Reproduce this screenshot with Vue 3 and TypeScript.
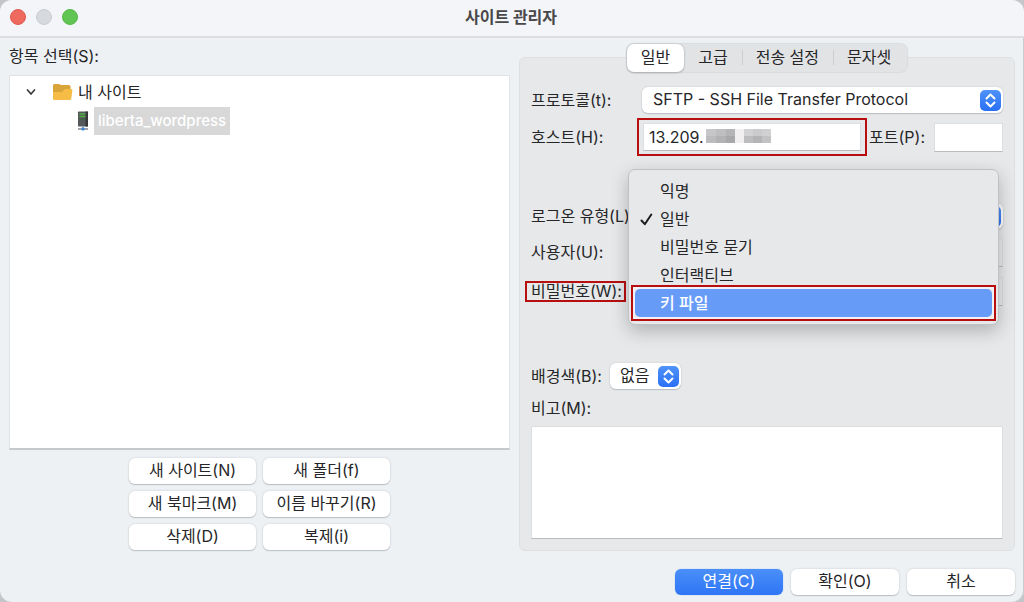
<script setup lang="ts">
import { ref } from 'vue'

const tabs = ['일반', '고급', '전송 설정', '문자셋']
const activeTab = ref(0)

const siteActions = [
  '새 사이트(N)',
  '새 폴더(f)',
  '새 북마크(M)',
  '이름 바꾸기(R)',
  '삭제(D)',
  '복제(i)',
]

const logonTypes = ['익명', '일반', '비밀번호 묻기', '인터랙티브', '키 파일']
const logonType = ref('일반')
const highlighted = ref('키 파일')

const protocol = ref('SFTP - SSH File Transfer Protocol')
const host = ref('13.209.')
const port = ref('')
const user = ref('')
const password = ref('')
const colour = ref('없음')
const notes = ref('')

const mosaic = [
  { x: 0, y: 0, w: 10, c: '#c6c6c8' },
  { x: 10, y: 0, w: 10, c: '#bebec0' },
  { x: 20, y: 0, w: 9, c: '#b4b4b6' },
  { x: 0, y: 7, w: 10, c: '#bcbcbe' },
  { x: 10, y: 7, w: 10, c: '#b2b2b4' },
  { x: 20, y: 7, w: 9, c: '#a8a8aa' },
  { x: 29, y: 0, w: 9, c: '#f1eff0' },
  { x: 29, y: 7, w: 9, c: '#f1eff0' },
  { x: 38, y: 0, w: 9, c: '#d2d2d4' },
  { x: 47, y: 0, w: 9, c: '#cacacc' },
  { x: 56, y: 0, w: 9, c: '#d0d0d2' },
  { x: 38, y: 7, w: 9, c: '#bdbdbf' },
  { x: 47, y: 7, w: 9, c: '#b4b4b6' },
  { x: 56, y: 7, w: 9, c: '#c2c2c4' },
]
</script>

<template>
  <div class="window">
    <header class="titlebar">
      <div class="lights">
        <button class="light close" type="button" aria-label="닫기"></button>
        <button class="light minimize" type="button" aria-label="최소화"></button>
        <button class="light zoom" type="button" aria-label="확대"></button>
      </div>
      <h1>사이트 관리자</h1>
    </header>

    <main class="body">
      <section class="sites">
        <div id="tree-label" class="tree-label">항목 선택(S):</div>
        <ul class="tree" role="tree" aria-labelledby="tree-label">
          <li class="node" role="treeitem" aria-expanded="true">
            <svg class="chevron" viewBox="0 0 10 8" width="10" height="8">
              <path d="M1.5 2 5 6 8.5 2" fill="none" stroke="#3d3d3f" stroke-width="1.7" stroke-linecap="round" stroke-linejoin="round" />
            </svg>
            <svg class="folder" viewBox="0 0 21 18" width="21" height="18">
              <path d="M1 2.5Q1 1 2.5 1H7l2 1h8q1.5 0 1.500 1.500V9H1z" fill="#d9a53a" />
              <path d="M1 9h9l3-3H19.500q1 0 .9 1l-1.100 8.800q-.2 1.200-1.500 1.200H2.500Q1 17 1 15.500z" fill="#f5bd45" />
            </svg>
            <span>내 사이트</span>
          </li>
          <li class="node child" role="treeitem" aria-selected="true">
            <svg class="server" viewBox="0 0 12 20" width="12" height="20">
              <rect x="1" y="0.5" width="10" height="15" rx="0.8" fill="#55585a" />
              <rect x="8.5" y="0.5" width="2.5" height="15" fill="#343638" />
              <path d="M2.500 3h6M2.500 5.500h6" stroke="#4fae45" stroke-width="1.5" />
              <path d="M3 8h5" stroke="#34653a" />
              <path d="M6 15.5v2M1 18h10" stroke="#7d8790" stroke-width="1.3" />
              <rect x="4.5" y="16.5" width="3" height="3" rx="1" fill="#3d86d8" />
            </svg>
            <span class="selected">liberta_wordpress</span>
          </li>
        </ul>
        <div class="actions">
          <button v-for="action in siteActions" :key="action" class="push" type="button">{{ action }}</button>
        </div>
      </section>

      <section class="panel">
        <div class="tabs" role="tablist">
          <button
            v-for="(tab, index) in tabs"
            :key="tab"
            class="tab"
            :class="{ active: index === activeTab }"
            type="button"
            role="tab"
            :aria-selected="index === activeTab"
            @click="activeTab = index"
          >
            {{ tab }}
          </button>
        </div>

        <div class="row protocol-row">
          <label class="caption" for="protocol">프로토콜(t):</label>
          <div class="popup">
            <select id="protocol" v-model="protocol">
              <option>SFTP - SSH File Transfer Protocol</option>
            </select>
            <svg class="arrows" viewBox="0 0 21 21" width="21" height="21">
              <path d="M6.5 8.500l4-4 4 4M6.500 12.500l4 4 4-4" />
            </svg>
          </div>
        </div>

        <div class="row host-row">
          <label class="caption" for="host">호스트(H):</label>
          <div class="host-mark">
            <input id="host" v-model="host" class="field" type="text" />
            <svg class="mosaic" viewBox="0 0 65 14" width="65" height="14" aria-hidden="true">
              <rect v-for="(cell, i) in mosaic" :key="i" :x="cell.x" :y="cell.y" :width="cell.w" height="7" :fill="cell.c" />
            </svg>
          </div>
          <label class="port-caption" for="port">포트(P):</label>
          <input id="port" v-model="port" class="field port" type="text" />
        </div>

        <div class="row logon-row">
          <label class="caption" for="logon">로그온 유형(L):</label>
          <div class="popup">
            <select id="logon" v-model="logonType">
              <option v-for="type in logonTypes" :key="type">{{ type }}</option>
            </select>
            <svg class="arrows" viewBox="0 0 21 21" width="21" height="21">
              <path d="M6.5 8.500l4-4 4 4M6.500 12.500l4 4 4-4" />
            </svg>
            <ul class="menu" role="listbox" aria-label="로그온 유형">
              <li
                v-for="type in logonTypes"
                :key="type"
                class="choice"
                :class="{ hot: type === highlighted }"
                role="option"
                :aria-selected="type === logonType"
                @mouseenter="highlighted = type"
                @click="logonType = type"
              >
                <svg v-if="type === logonType" class="check" viewBox="0 0 13 13" width="13" height="13">
                  <path d="M1.500 7.500 4.800 11.200 11.300 1.500" fill="none" stroke="#1c1c1e" stroke-width="2" stroke-linecap="round" stroke-linejoin="round" />
                </svg>
                {{ type }}
              </li>
            </ul>
          </div>
        </div>

        <div class="row user-row">
          <label class="caption" for="user">사용자(U):</label>
          <input id="user" v-model="user" class="field muted" type="text" />
        </div>

        <div class="row password-row">
          <div class="caption"><label class="marked" for="password">비밀번호(W):</label></div>
          <input id="password" v-model="password" class="field muted" type="password" />
        </div>

        <div class="row colour-row">
          <label for="colour">배경색(B):</label>
          <div class="popup small">
            <select id="colour" v-model="colour">
              <option>없음</option>
            </select>
            <svg class="arrows" viewBox="0 0 21 21" width="21" height="21">
              <path d="M6.5 8.500l4-4 4 4M6.500 12.500l4 4 4-4" />
            </svg>
          </div>
        </div>

        <label class="notes-caption" for="notes">비고(M):</label>
        <textarea id="notes" v-model="notes" class="field notes"></textarea>
      </section>
    </main>

    <footer class="footer">
      <button class="push primary" type="button">연결(C)</button>
      <button class="push" type="button">확인(O)</button>
      <button class="push" type="button">취소</button>
    </footer>
  </div>
</template>

<style>
body {
  margin: 0;
  background: #c3c5c8;
}
</style>

<style scoped>
.window,
.window * {
  box-sizing: border-box;
}

.window {
  display: flex;
  flex-direction: column;
  min-height: 100vh;
  overflow: hidden;
  border-radius: 12px;
  background: #edf1f4;
  box-shadow: inset -1px 0 #c9cccf, inset 0 1px #d5d7d9;
  color: #262628;
  font: 16px/20px Inter, 'Noto Sans CJK KR', sans-serif;
}

button,
input,
select,
textarea {
  margin: 0;
  border: 0;
  color: inherit;
  font: inherit;
}

ul {
  margin: 0;
  padding: 0;
  list-style: none;
}

label {
  white-space: nowrap;
}

.titlebar {
  display: grid;
  grid-template-columns: 1fr auto 1fr;
  align-items: center;
  height: 38px;
  padding: 0 12px 2px 10px;
  border-bottom: 2px solid #dcdee1;
  background: #f4f5f8;
}

.titlebar h1 {
  margin: 0;
  color: #48484a;
  font-size: 16px;
  font-weight: 700;
  line-height: 20px;
}

.lights {
  display: flex;
  gap: 10px;
}

.light {
  width: 16px;
  height: 16px;
  padding: 0;
  border: 1px solid #df5a50;
  border-radius: 50%;
  background: #ee6a5f;
}

.minimize {
  border-color: #c9ccd0;
  background: #d6d9dd;
}

.zoom {
  border-color: #56b847;
  background: #61c554;
}

.body {
  display: grid;
  flex: 1;
  grid-template-columns: 501fr 496fr;
  gap: 9px;
  padding: 0 9px;
}

.sites {
  display: flex;
  flex-direction: column;
  min-width: 0;
}

.tree-label {
  height: 37px;
  padding-top: 8px;
}

.tree {
  flex: 1;
  padding: 1px 0 0 16px;
  border: 1px solid #e0e3e5;
  border-bottom: 2px solid #c6c9cc;
  background: #fff;
}

.node {
  display: flex;
  align-items: center;
  height: 29px;
}

.chevron {
  margin-right: 16px;
}

.folder {
  margin-right: 5px;
}

.child {
  padding-left: 51px;
}

.server {
  margin-right: 5px;
}

.selected {
  padding: 4px;
  background: #d8d8d8;
  color: #fff;
  font-size: 15px;
  font-weight: 500;
}

.actions {
  display: grid;
  grid-template-columns: 127px 127px;
  justify-content: center;
  gap: 7px;
  padding: 8px 0 1px;
}

.push {
  height: 26px;
  padding: 0 4px 2px;
  border-radius: 6px;
  background: #fff;
  box-shadow: 0 0 2px #c3c7cb, 0 1px 1px #b9bdc1;
  line-height: 22px;
  white-space: nowrap;
}

.panel {
  display: flex;
  flex-direction: column;
  min-width: 0;
  margin-top: 19px;
  padding: 0 11px;
  padding-bottom: 11px;
  border: 1px solid #dddfe1;
  border-radius: 6px;
  background: #e7e8ea;
}

.tabs {
  display: flex;
  align-self: center;
  height: 28px;
  margin: -14px 0 14px;
  padding-right: 2px;
  border-radius: 7px;
  background: #e1e3e5;
  box-shadow: 0 0 1px 1px #d9dbdd;
}

.tab {
  position: relative;
  padding: 0 14px 2px;
  border-radius: 7px;
  background: transparent;
  white-space: nowrap;
}

.tab.active {
  background: #fff;
  box-shadow: 0 0 2px #b5b8ba, 0 1px 2px #a9adb1;
}

.tab:nth-child(n + 3)::before {
  position: absolute;
  top: 6px;
  left: 0;
  width: 1px;
  height: 15px;
  background: #cbcdcf;
  content: '';
}

.row {
  display: flex;
  align-items: center;
  height: 28px;
}

.caption {
  flex: none;
  width: 111px;
}

.popup {
  position: relative;
  display: flex;
  flex: 1;
  height: 26px;
}

.popup select {
  width: 100%;
  padding: 0 28px 2px 11px;
  border-radius: 6px;
  appearance: none;
  background: #fff;
  box-shadow: 0 0 2px #c3c6c9, 0 1px 1px #b9bdc1;
}

.arrows {
  position: absolute;
  top: 3px;
  right: 2px;
  border-radius: 5px;
  background: linear-gradient(#4f92f8, #2a70f5);
  pointer-events: none;
}

.arrows path {
  fill: none;
  stroke: #fff;
  stroke-width: 2;
  stroke-linecap: round;
  stroke-linejoin: round;
}

.field {
  min-width: 0;
  height: 29px;
  padding: 0 5px;
  border: 1px solid #dcdee0;
  border-bottom-color: #b9bbbd;
  border-radius: 0;
  outline: 0;
  background: #fff;
}

.host-row {
  height: 38px;
  margin-top: 4px;
}

.host-mark {
  position: relative;
  display: flex;
  flex: 1;
  min-width: 0;
  margin-left: -5px;
  padding: 3px 4px;
  border: 2px solid #b80e10;
}

.host-mark .field {
  width: 100%;
  height: 28px;
}

.mosaic {
  position: absolute;
  top: 9px;
  left: 67px;
}

.port-caption {
  margin: 0 9px 0 2px;
}

.port {
  width: 69px;
}

.logon-row {
  margin-top: 46px;
}

.menu {
  position: absolute;
  z-index: 2;
  top: -34px;
  right: 4px;
  left: -14px;
  padding: 7px 6px;
  border: 1px solid #bfc1c3;
  border-radius: 7px;
  background: #e7e8ea;
  box-shadow: 0 6px 18px rgb(0 0 0 / 24%);
}

.choice {
  position: relative;
  height: 28px;
  padding: 4px 25px;
  border-radius: 5px;
}

.hot {
  background: #679bf8;
  color: #fff;
  font-weight: 500;
}

.hot::after {
  position: absolute;
  inset: -4px;
  border: 2px solid #b80e10;
  box-shadow: inset 0 0 0 2px #f0f2f8;
  content: '';
}

.check {
  position: absolute;
  top: 8px;
  left: 5px;
}

.user-row {
  margin-top: 8px;
}

.password-row {
  margin-top: 11px;
}

.muted {
  flex: 1;
  background: #e9eaec;
}

.marked {
  display: inline-block;
  height: 21px;
  margin-left: -6px;
  padding: 0 2px 0 4px;
  border: 2px solid #b80e10;
  line-height: 16px;
}

.colour-row {
  gap: 8px;
  margin-top: 57px;
}

.small {
  flex: none;
}

.small select {
  width: 71px;
  padding-left: 10px;
}

.notes-caption {
  margin: 8px 0;
}

.notes {
  flex: 1;
  width: 100%;
  min-height: 112px;
  padding: 4px;
  resize: none;
}

.footer {
  display: flex;
  justify-content: flex-end;
  gap: 8px;
  padding: 18px 9px 7px;
}

.footer .push {
  width: 108px;
}

.footer .primary {
  background: linear-gradient(#4a8ff8, #2f75f6);
  box-shadow: 0 0 1px #5c93ef;
  color: #fff;
}
</style>
